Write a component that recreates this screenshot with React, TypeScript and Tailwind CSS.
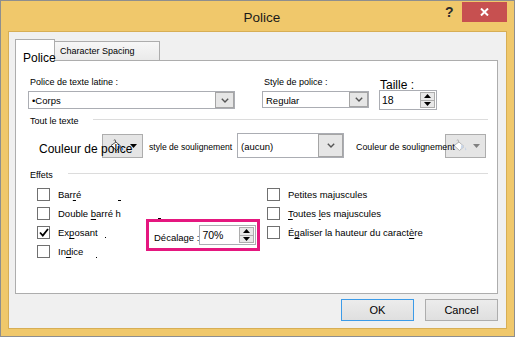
import React from "react";

function Chevron() {
  return (
    <svg width="8" height="5" viewBox="0 0 8 5">
      <polyline points="0.8,0.8 4,4 7.2,0.8" fill="none" stroke="#555" strokeWidth="1.4" />
    </svg>
  );
}

function Tri({ color = "#000", up = false }: { color?: string; up?: boolean }) {
  return (
    <svg width="7" height="4" viewBox="0 0 7 4">
      <polygon points={up ? "0,4 7,4 3.5,0" : "0,0 7,0 3.5,4"} fill={color} />
    </svg>
  );
}

function Bucket({ faded = false }: { faded?: boolean }) {
  const line = faded ? "#b5b5b5" : "#555";
  const blue = faded ? "#c9d6e8" : "#3f7fd6";
  return (
    <svg width="16" height="13" viewBox="0 0 16 13">
      <path d="M5 1.5 C5 0.5 6.5 0.5 6.5 1.5 L6.5 5" fill="none" stroke={line} strokeWidth="1" />
      <path d="M2 6.5 L7 3 L12 7.5 L7.5 11.5 Z" fill="#fff" stroke={line} strokeWidth="1" />
      <path d="M9.5 5.3 L12 7.5 L8.5 10.6 Z" fill={blue} />
      <path d="M13 8 L14.5 10.5 L13 11.5 Z" fill={blue} />
    </svg>
  );
}

function Label({ children, className = "" }: { children: React.ReactNode; className?: string }) {
  return <div className={`text-[9px] leading-[13px] whitespace-nowrap ${className}`}>{children}</div>;
}

function Combo({ text, h, btnW }: { text: string; h: string; btnW: string }) {
  return (
    <div className={`flex border border-[#abadb3] bg-white ${h}`}>
      <div className="flex-1 flex items-center pl-[3px] pt-[2px] text-[9.5px] leading-[12px] whitespace-nowrap">{text}</div>
      <div className={`${btnW} border border-[#a5a5a5] bg-[#e6e6e6] flex items-center justify-center`}>
        <Chevron />
      </div>
    </div>
  );
}

function Spin({ value, w }: { value: string; w: string }) {
  return (
    <div className={`flex border border-[#abadb3] bg-white h-[20px] ${w}`}>
      <div className="flex-1 flex items-center pl-[2px] text-[10.5px] leading-[12px]">{value}</div>
      <div className="w-[15px] flex flex-col my-[1px] mr-[1px]">
        <div className="flex-1 border border-[#adadad] bg-[#e8e8e8] flex items-center justify-center">
          <Tri up />
        </div>
        <div className="flex-1 border border-t-0 border-[#adadad] bg-[#e8e8e8] flex items-center justify-center">
          <Tri />
        </div>
      </div>
    </div>
  );
}

function ColorBtn({ faded = false }: { faded?: boolean }) {
  return (
    <div className="w-[41px] h-[24px] border border-[#adadad] bg-[#e5e5e5] flex items-center pl-[6px] gap-[5px] shrink-0">
      <Bucket faded={faded} />
      <Tri color={faded ? "#808080" : "#000"} />
    </div>
  );
}

function Box({ checked = false }: { checked?: boolean }) {
  return (
    <span className="w-[13px] h-[13px] border border-[#707070] bg-white flex items-center justify-center shrink-0">
      {checked && (
        <svg width="10" height="9" viewBox="0 0 10 9">
          <polyline points="1,4.5 3.8,7.5 9,1" fill="none" stroke="#000" strokeWidth="1.8" />
        </svg>
      )}
    </span>
  );
}

function Row({ checked, children }: { checked?: boolean; children: React.ReactNode }) {
  return (
    <div className="h-[19px] flex items-center gap-[8px]">
      <Box checked={checked} />
      <span className="text-[9.5px] leading-[13px] whitespace-nowrap">{children}</span>
    </div>
  );
}

const U = ({ c }: { c: string }) => <span className="underline decoration-1 underline-offset-[2px]">{c}</span>;

export default function App() {
  return (
    <div className="w-[515px] h-[337px] overflow-hidden font-['Liberation_Sans',Arial,sans-serif] text-black">
      <div className="w-full h-full border border-[#8e8e8e] bg-[#f0c86b] flex flex-col">
        {/* title bar */}
        <div className="relative h-[30px] shrink-0 flex justify-center items-center pl-[9px]">
          <span className="mt-[4px] text-[13.5px] leading-[16px] text-[#1a1a1a]">Police</span>
          <span className="absolute left-[444px] top-[4px] text-[14px] font-bold leading-[14px] text-[#2b2b2b]">?</span>
          <div className="absolute left-[461px] top-[1px] w-[45px] h-[20px] bg-[#c75050] flex items-center justify-center">
            <svg width="9" height="8" viewBox="0 0 9 8">
              <path d="M1 0.5 L8 7.5 M8 0.5 L1 7.5" stroke="#fff" strokeWidth="2" />
            </svg>
          </div>
        </div>

        {/* client */}
        <div className="ml-[7px] w-[499px] h-[298px] border border-[#d7ae55] bg-[#f0f0f0] flex flex-col">
          <div className="flex items-end h-[21px] mt-[7px] ml-[6px] shrink-0">
            <div className="relative z-10 h-[22px] -mb-px w-[40px] bg-white border border-b-0 border-[#adadad] pl-[7px] pt-[5px]">
              <span className="text-[12px] leading-[14px] whitespace-nowrap">Police</span>
            </div>
            <div className="h-[19px] w-[105px] border border-l-0 border-b-0 border-[#adadad] bg-gradient-to-b from-[#f7f7f7] to-[#eaeaea] pl-[5px] pt-[4px]">
              <div className="text-[9px] leading-[11px] whitespace-nowrap">Character Spacing</div>
            </div>
          </div>

          <div className="ml-[6px] w-[483px] h-[234px] border border-[#adadad] bg-white flex flex-col shrink-0">
            {/* fonts row */}
            <div className="flex mt-[15px] pl-[12px]">
              <div className="w-[207px] flex flex-col">
                <Label className="pl-[2px]">Police de texte latine :</Label>
                <div className="mt-[2px]">
                  <Combo text="•Corps" h="h-[18px]" btnW="w-[19px]" />
                </div>
              </div>
              <div className="ml-[27px] w-[107px] flex flex-col">
                <Label className="pl-[2px]">Style de police :</Label>
                <div className="mt-[2px]">
                  <Combo text="Regular" h="h-[17px]" btnW="w-[19px]" />
                </div>
              </div>
              <div className="ml-[10px] w-[58px] flex flex-col">
                <div className="mt-[3px] pl-[1px] text-[12px] leading-[12px] whitespace-nowrap">Taille :</div>
                <div className="-mt-px">
                  <Spin value="18" w="w-[58px]" />
                </div>
              </div>
            </div>

            {/* tout le texte */}
            <div className="flex items-start mt-[5px] pl-[14px] pr-[9px]">
              <Label>Tout le texte</Label>
              <div className="flex-1 h-px bg-[#dcdcdc] mt-[4px] ml-[14px]" />
            </div>

            <div className="flex items-center h-[25px] mt-[5px] pl-[23px]">
              <span className="relative z-10 w-[63px] whitespace-nowrap text-[12px] leading-[14px] mt-[7px] shrink-0">Couleur de police</span>
              <ColorBtn />
              <span className="ml-[6px] w-[88px] shrink-0 text-[8.6px] leading-[13px] mt-[4px] whitespace-nowrap">style de soulignement</span>
              <div className="w-[107px] h-[25px] flex border border-[#abadb3] bg-white shrink-0">
                <div className="flex-1 flex items-center pl-[3px] pt-[3px] text-[9.5px] leading-[12px]">(aucun)</div>
                <div className="w-[25px] border border-[#a5a5a5] bg-[#e6e6e6] flex items-center justify-center">
                  <Chevron />
                </div>
              </div>
              <span className="relative z-10 ml-[12px] w-[89px] shrink-0 text-[8.9px] leading-[13px] mt-[4px] whitespace-nowrap">Couleur de soulignement</span>
              <ColorBtn faded />
            </div>

            {/* effets */}
            <div className="flex items-start mt-[11px] pl-[14px] pr-[9px]">
              <Label>Effets</Label>
              <div className="flex-1 h-px bg-[#dcdcdc] mt-[4px] ml-[15px]" />
            </div>

            <div className="flex mt-[3px] pl-[21px]">
              <div className="w-[109px] flex flex-col shrink-0">
                <Row>
                  Bar<U c="r" />é<span className="inline-block w-[3px] h-px bg-black ml-[37px] align-[-3px]" />
                </Row>
                <Row>
                  Double <U c="b" />arré h<span className="inline-block w-[3px] h-px bg-black ml-[37px] align-[-2px]" />
                </Row>
                <Row checked>
                  Ex<U c="p" />osant<span className="inline-block w-px h-px bg-black ml-[7px] align-[-2px]" />
                </Row>
                <Row>
                  In<U c="d" />ice<span className="inline-block w-px h-px bg-black ml-[13px] align-[-3px]" />
                </Row>
              </div>

              <div className="mt-[34px] w-[114px] h-[32px] border-[3px] border-[#e5177f] flex items-center justify-between pl-[5px] pr-[1px] shrink-0">
                <span className="text-[9.5px] leading-[13px] mt-[4px] whitespace-nowrap">Décalage :</span>
                <Spin value="70%" w="w-[58px]" />
              </div>

              <div className="ml-[7px] flex flex-col">
                <Row>Petites majuscules</Row>
                <Row>
                  <U c="T" />outes <U c="l" />es majuscules
                </Row>
                <Row>
                  É<U c="g" />aliser la hauteur du caract<U c="è" />re
                </Row>
              </div>
            </div>
          </div>

          <div className="flex justify-end gap-[11px] mt-[5px] mr-[8px] h-[22px] shrink-0">
            <div className="w-[73px] h-[22px] border border-[#3c9be8] bg-gradient-to-b from-[#ececec] to-[#dfdfdf] flex items-center justify-center text-[11px] leading-[13px]">
              OK
            </div>
            <div className="w-[73px] h-[22px] border border-[#adadad] bg-gradient-to-b from-[#ececec] to-[#dfdfdf] flex items-center justify-center text-[11px] leading-[13px]">
              Cancel
            </div>
          </div>
        </div>
      </div>
    </div>
  );
}
